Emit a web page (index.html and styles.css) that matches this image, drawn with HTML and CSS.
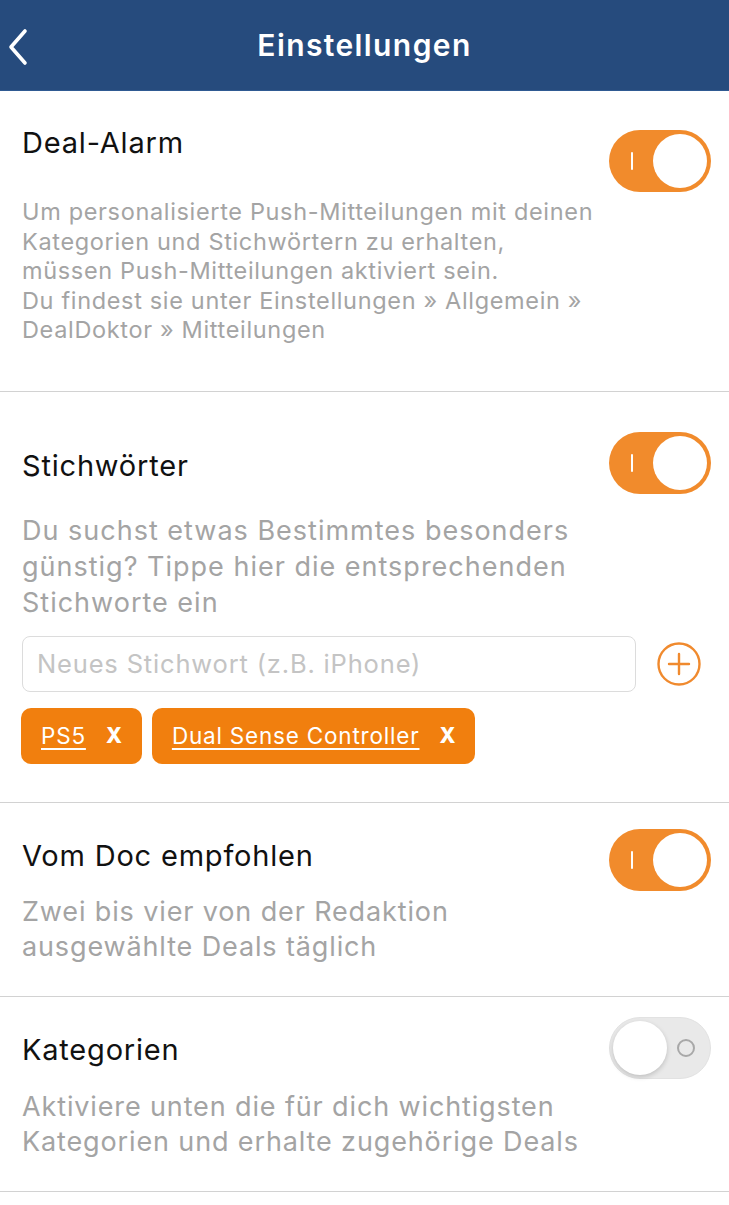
FILE: index.html
```html
<!DOCTYPE html>
<html lang="de">
<head>
<meta charset="utf-8">
<title>Einstellungen</title>
<link rel="stylesheet" href="styles.css">
</head>
<body>
<header class="nav">
  <svg class="back" width="24" height="40" viewBox="0 0 24 40"><path d="M19 4 L5 20 L19 36" fill="none" stroke="#fff" stroke-width="3.6" stroke-linecap="round" stroke-linejoin="round"/></svg>
  <h1 class="nav-title">Einstellungen</h1>
</header>

<section class="sec sec-alarm">
  <div class="row">
    <h2 class="title title-top">Deal-Alarm</h2>
    <span class="toggle on"><span class="mark"></span><span class="knob"></span></span>
  </div>
  <p class="desc desc-small">Um personalisierte Push-Mitteilungen mit deinen<br>Kategorien und Stichwörtern zu erhalten,<br>müssen Push-Mitteilungen aktiviert sein.<br>Du findest sie unter Einstellungen » Allgemein »<br>DealDoktor » Mitteilungen</p>
</section>

<section class="sec sec-keywords">
  <div class="row">
    <h2 class="title title-kw">Stichwörter</h2>
    <span class="toggle on"><span class="mark"></span><span class="knob"></span></span>
  </div>
  <p class="desc desc-kw">Du suchst etwas Bestimmtes besonders<br>günstig? Tippe hier die entsprechenden<br>Stichworte ein</p>
  <div class="input-row">
    <div class="input">Neues Stichwort (z.B. iPhone)</div>
    <svg class="plus" width="46" height="46" viewBox="0 0 46 46"><circle cx="23" cy="23" r="20.5" fill="none" stroke="#f08a2e" stroke-width="2.4"/><path d="M23 13 V33 M13 23 H33" stroke="#f08a2e" stroke-width="2.4" stroke-linecap="round"/></svg>
  </div>
  <div class="chips">
    <span class="chip"><span class="chip-text">PS5</span><span class="chip-x">X</span></span>
    <span class="chip"><span class="chip-text">Dual Sense Controller</span><span class="chip-x">X</span></span>
  </div>
</section>

<section class="sec sec-doc">
  <div class="row">
    <h2 class="title title-doc">Vom Doc empfohlen</h2>
    <span class="toggle on"><span class="mark"></span><span class="knob"></span></span>
  </div>
  <p class="desc desc-doc">Zwei bis vier von der Redaktion<br>ausgewählte Deals täglich</p>
</section>

<section class="sec sec-cat">
  <div class="row">
    <h2 class="title title-cat">Kategorien</h2>
    <span class="toggle off"><span class="knob"></span><span class="ring"></span></span>
  </div>
  <p class="desc desc-cat">Aktiviere unten die für dich wichtigsten<br>Kategorien und erhalte zugehörige Deals</p>
</section>
</body>
</html>
```

FILE: styles.css
```css
* { box-sizing: border-box; }
html, body { margin: 0; padding: 0; background: #fff; }
body {
  font-family: Inter, "Noto Sans", "DejaVu Sans", sans-serif;
  color: #111;
  width: 729px;
}
.nav {
  height: 91px;
  background: #264b7d;
  display: flex;
  align-items: center;
  justify-content: center;
  position: relative;
  border-bottom: 1px solid #2f5a92;
}
.back { position: absolute; left: 6px; top: 27px; }
.nav-title {
  margin: 0;
  color: #fff;
  font-size: 30px;
  font-weight: 600;
  letter-spacing: 1.4px;
}
.sec {
  padding: 0 18px 0 22px;
  border-bottom: 1px solid #d2d2d2;
}
.row {
  display: flex;
  align-items: center;
  justify-content: space-between;
}
.title {
  margin: 0;
  font-size: 29px;
  font-weight: 400;
  line-height: 36px;
  letter-spacing: 0.8px;
}
.title-top { align-self: flex-start; margin-top: -5px; }
.title-kw { margin-top: 6px; }
.title-doc { margin-bottom: 8px; }
.title-cat { margin-top: 4px; }
.toggle {
  width: 102px;
  height: 62px;
  border-radius: 31px;
  position: relative;
  flex: none;
}
.toggle.on { background: #f18b2c; }
.toggle.off { background: #e9e9e9; border: 1px solid #e2e2e2; }
.knob {
  position: absolute;
  width: 54px;
  height: 54px;
  border-radius: 50%;
  background: #fff;
  top: 4px;
}
.toggle.on .knob { right: 4px; }
.toggle.off .knob { left: 3px; top: 3px; box-shadow: 0 2px 5px rgba(0,0,0,0.18); }
.mark {
  position: absolute;
  left: 22px;
  top: 22px;
  width: 2px;
  height: 18px;
  background: #fff;
  border-radius: 1px;
}
.ring {
  position: absolute;
  right: 15px;
  top: 21px;
  width: 18px;
  height: 18px;
  border-radius: 50%;
  border: 2px solid #a8a8a8;
}
.desc {
  margin: 0;
  color: #a4a4a4;
}
.desc-small { font-size: 23.5px; line-height: 29.5px; margin-top: 5px; letter-spacing: 0.66px; }
.desc-kw, .desc-doc, .desc-cat { font-size: 27px; line-height: 36px; }
.desc-kw { letter-spacing: 1px; }
.desc-doc, .desc-cat { line-height: 35px; letter-spacing: 0.87px; }
.sec-alarm { padding-top: 39px; padding-bottom: 46px; }
.sec-keywords { padding-top: 40px; padding-bottom: 38px; }
.desc-kw { margin-top: 19px; }
.sec-doc { padding-top: 26px; padding-bottom: 32px; }
.desc-doc { margin-top: 3px; }
.sec-cat { padding-top: 20px; padding-bottom: 32px; }
.desc-cat { margin-top: 10px; }
.input-row {
  display: flex;
  align-items: center;
  margin-top: 15px;
  gap: 20px;
}
.input {
  width: 614px;
  height: 56px;
  border: 1px solid #dcdcdc;
  border-radius: 8px;
  padding-left: 14px;
  display: flex;
  align-items: center;
  font-size: 25.5px;
  letter-spacing: 0.83px;
  color: #c4c4c4;
}
.plus { flex: none; }
.chips {
  display: flex;
  gap: 10px;
  margin-top: 16px;
  margin-left: -1px;
}
.chip {
  height: 56px;
  background: #f17f0e;
  border-radius: 10px;
  display: inline-flex;
  align-items: center;
  padding: 0 20px;
  gap: 20px;
  color: #fff;
}
.chip-text {
  font-size: 22.5px;
  letter-spacing: 0.8px;
  text-decoration: underline;
  text-underline-offset: 4px;
  text-decoration-thickness: 1.5px;
}
.chip-x { font-size: 21px; font-weight: 800; }
```
